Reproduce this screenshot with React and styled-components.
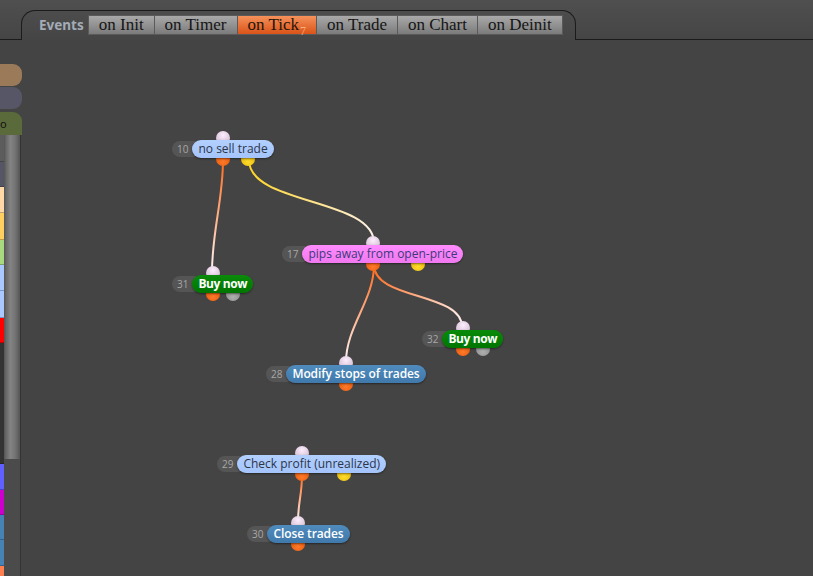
import React from "react";
import styled, { createGlobalStyle, css } from "styled-components";

const GlobalStyle = createGlobalStyle`
  html, body { margin: 0; padding: 0; background: #444; overflow: hidden; }
  * { box-sizing: border-box; }
`;

const Page = styled.div`
  width: 813px;
  height: 576px;
  display: flex;
  flex-direction: column;
  background: #444;
`;

const TopBar = styled.div`
  height: 40px;
  display: flex;
  flex: none;
  background: linear-gradient(#4f4f4f, #454545);
`;

const Edge = styled.div`
  width: ${(p) => (p.$grow ? "auto" : "21px")};
  flex: ${(p) => (p.$grow ? "1" : "none")};
  border-bottom: 1px solid #1b1b1b;
`;

const Tab = styled.div`
  width: 555px;
  margin-top: 10px;
  border: 1px solid #1b1b1b;
  border-bottom: none;
  border-radius: 14px 14px 0 0;
  display: flex;
  align-items: flex-start;
  padding: 4px 0 0 17px;
  gap: 5px;
`;

const EventsLabel = styled.span`
  font-family: "Noto Sans", "Open Sans", sans-serif;
  font-weight: 700;
  font-size: 13.5px;
  line-height: 20px;
  color: #a3acb6;
`;

const ButtonGroup = styled.div`
  display: flex;
`;

const TabButton = styled.div`
  height: 20px;
  padding: 0 10px;
  border: 1px solid #5a5a5a;
  margin-left: -1px;
  font-family: "Liberation Serif", serif;
  font-size: 17px;
  line-height: 18px;
  color: #151515;
  background: linear-gradient(#a9a9a9, #7b7b7b);
  white-space: nowrap;
  ${(p) =>
    p.$active &&
    css`
      background: linear-gradient(#f5915a, #db5318);
      color: #26150c;
    `}
`;

const Sub = styled.span`
  font-size: 12px;
  color: #f6b07a;
  position: relative;
  top: 5px;
  margin-left: 1px;
`;

const Body = styled.div`
  flex: 1;
  display: flex;
  min-height: 0;
`;

const Sidebar = styled.div`
  width: 22px;
  flex: none;
  display: flex;
  flex-direction: column;
  padding-top: 24px;
  overflow: hidden;
`;

const SidePill = styled.div`
  height: ${(p) => p.$h}px;
  margin-bottom: ${(p) => p.$mb || 0}px;
  background: ${(p) => p.$bg};
  border-radius: ${(p) => (p.$open ? "0 9px 0 0" : "0 9px 9px 0")};
  font-family: "Noto Sans", sans-serif;
  font-size: 11px;
  line-height: 23px;
  color: #111;
  overflow: hidden;
  white-space: nowrap;
`;

const ListArea = styled.div`
  flex: 1;
  display: flex;
  min-height: 0;
`;

const Strips = styled.div`
  width: 4px;
  display: flex;
  flex-direction: column;
`;

const Strip = styled.div`
  height: ${(p) => p.$h}px;
  flex: none;
  background: ${(p) => p.$bg};
  border-bottom: 1px solid rgba(0, 0, 0, 0.25);
`;

const Track = styled.div`
  width: 17px;
  background: #4b4b4b;
  border-right: 1px solid #333;
`;

const Thumb = styled.div`
  height: 324px;
  background: linear-gradient(90deg, #555 0%, #6a6a6a 15%, #838383 40%, #737373 70%, #555 100%);
`;

const Canvas = styled.div`
  flex: 1;
  position: relative;
  background: #444;
`;

const Wires = styled.svg`
  position: absolute;
  inset: 0;
  width: 100%;
  height: 100%;
  pointer-events: none;
`;

const NodeBox = styled.div`
  position: absolute;
  display: flex;
  align-items: center;
  height: 18px;
`;

const NumPill = styled.div`
  position: relative;
  z-index: 1;
  height: 16px;
  padding: 0 14px 0 5px;
  margin-right: -10px;
  border-radius: 8px;
  background: #555;
  font-family: "Open Sans", "Noto Sans", sans-serif;
  font-size: 10px;
  line-height: 16px;
  color: #a8a8a8;
`;

const labelKinds = {
  light: css`
    background: linear-gradient(#b2d0ff, #a4c4fa);
    color: #2c3448;
  `,
  pink: css`
    background: linear-gradient(#ff8cff, #f078f0);
    color: #3b3a78;
  `,
  green: css`
    background: linear-gradient(#0a8a0a, #007600);
    color: #fff;
    font-weight: 700;
    letter-spacing: -0.4px;
  `,
  steel: css`
    background: linear-gradient(#4f8bbd, #4079ab);
    color: #fff;
    font-weight: 600;
    letter-spacing: -0.1px;
  `,
};

const Label = styled.div`
  position: relative;
  z-index: 2;
  height: 18px;
  padding: 0 6px;
  border-radius: 9px;
  font-family: "Open Sans", "Noto Sans", sans-serif;
  font-size: 12px;
  line-height: 18px;
  white-space: nowrap;
  box-shadow: 0 1px 2px rgba(0, 0, 0, 0.45);
  ${(p) => labelKinds[p.$kind]}
`;

const dotColors = {
  in: "radial-gradient(circle at 50% 30%, #fbeefb, #c9acc9)",
  orange: "radial-gradient(circle at 50% 70%, #ff7a2a, #e04c00)",
  yellow: "radial-gradient(circle at 50% 70%, #ffdc2a, #e0ac00)",
  gray: "radial-gradient(circle at 50% 70%, #b0b0b0, #808080)",
};

const Dot = styled.div`
  position: absolute;
  z-index: 0;
  width: 14px;
  height: 14px;
  margin-left: -7px;
  border-radius: 50%;
  left: ${(p) => p.$at}%;
  ${(p) => (p.$top ? "top: -9px;" : "bottom: -8px;")}
  background: ${(p) => dotColors[p.$c]};
`;

const OX = 22;
const OY = 40;

const nodes = [
  { id: 10, label: "no sell trade", x: 172, y: 140, kind: "light", outs: ["orange", "yellow"] },
  { id: 17, label: "pips away from open-price", x: 282, y: 245, kind: "pink", outs: ["orange", "yellow"] },
  { id: 31, label: "Buy now", x: 172, y: 275, kind: "green", outs: ["orange", "gray"] },
  { id: 32, label: "Buy now", x: 422, y: 330, kind: "green", outs: ["orange", "gray"] },
  { id: 28, label: "Modify stops of trades", x: 266, y: 365, kind: "steel", outs: ["orange"] },
  { id: 29, label: "Check profit (unrealized)", x: 217, y: 455, kind: "light", outs: ["orange", "yellow"] },
  { id: 30, label: "Close trades", x: 247, y: 525, kind: "steel", outs: ["orange"] },
];

const wires = [
  { from: [223, 160], to: [212, 272], c: "#ff6a1a", k: 40 },
  { from: [249, 160], to: [374, 243], c: "#ffd21a", k: 45 },
  { from: [374, 265], to: [346, 362], c: "#ff6a1a", k: 35 },
  { from: [374, 265], to: [462, 327], c: "#ff6a1a", k: 35 },
  { from: [302, 475], to: [298, 522], c: "#ff6a1a", k: 20 },
];

const strips = [
  ["#5c5c5c", 27],
  ["#555566", 25],
  ["#ffd8a8", 26],
  ["#ffd060", 27],
  ["#a8d880", 25],
  ["#a8c8ff", 26],
  ["#a8c8ff", 27],
  ["#ff0000", 25],
  ["#333333", 121],
  ["#6060ff", 26],
  ["#cc00cc", 25],
  ["#4682b4", 25],
  ["#4682b4", 26],
  ["#ff7f50", 20],
];

const tabs = ["on Init", "on Timer", "on Tick", "on Trade", "on Chart", "on Deinit"];

function Node({ n }) {
  return (
    <NodeBox style={{ left: n.x - OX, top: n.y - OY }}>
      <Dot $c="in" $at={50} $top />
      {n.outs.map((c, i) => (
        <Dot key={c} $c={c} $at={i === 0 ? 50 : 75} />
      ))}
      <NumPill>{n.id}</NumPill>
      <Label $kind={n.kind}>{n.label}</Label>
    </NodeBox>
  );
}

export default function App() {
  return (
    <Page>
      <GlobalStyle />
      <TopBar>
        <Edge />
        <Tab>
          <EventsLabel>Events</EventsLabel>
          <ButtonGroup>
            {tabs.map((t) => (
              <TabButton key={t} $active={t === "on Tick"}>
                {t}
                {t === "on Tick" && <Sub>7</Sub>}
              </TabButton>
            ))}
          </ButtonGroup>
        </Tab>
        <Edge $grow />
      </TopBar>
      <Body>
        <Sidebar>
          <SidePill $h={22} $mb={1} $bg="#9b7a5a" />
          <SidePill $h={22} $mb={3} $bg="#565666" />
          <SidePill $h={23} $bg="#5b6a3a" $open>
            o
          </SidePill>
          <ListArea>
            <Strips>
              {strips.map(([c, h], i) => (
                <Strip key={i} $bg={c} $h={h} />
              ))}
            </Strips>
            <Track>
              <Thumb />
            </Track>
          </ListArea>
        </Sidebar>
        <Canvas>
          <Wires>
            <defs>
              {wires.map((w, i) => (
                <linearGradient
                  key={i}
                  id={`wg${i}`}
                  gradientUnits="userSpaceOnUse"
                  x1={w.from[0] - OX}
                  y1={w.from[1] - OY}
                  x2={w.to[0] - OX}
                  y2={w.to[1] - OY}
                >
                  <stop offset="0" stopColor={w.c} />
                  <stop offset="1" stopColor="#fff4f4" />
                </linearGradient>
              ))}
            </defs>
            {wires.map((w, i) => {
              const [x1, y1] = [w.from[0] - OX, w.from[1] - OY];
              const [x2, y2] = [w.to[0] - OX, w.to[1] - OY];
              return (
                <path
                  key={i}
                  d={`M${x1} ${y1} C${x1} ${y1 + w.k} ${x2} ${y2 - w.k} ${x2} ${y2}`}
                  stroke={`url(#wg${i})`}
                  strokeWidth="2"
                  fill="none"
                />
              );
            })}
          </Wires>
          {nodes.map((n) => (
            <Node key={n.id} n={n} />
          ))}
        </Canvas>
      </Body>
    </Page>
  );
}
